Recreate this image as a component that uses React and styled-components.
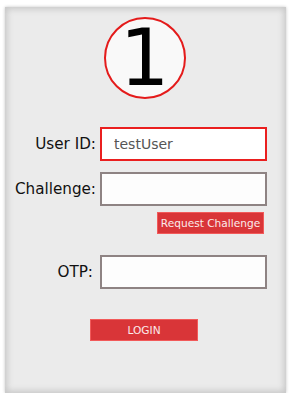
import React, { useState } from "react";
import styled, { createGlobalStyle } from "styled-components";

const GlobalStyle = createGlobalStyle`
  html, body {
    margin: 0;
    padding: 0;
    background: #ffffff;
  }
  body {
    font-family: "DejaVu Sans", sans-serif;
  }
`;

const Panel = styled.div`
  box-sizing: border-box;
  width: 281px;
  height: 386px;
  margin: 7px 0 0 5px;
  background: #ebebeb;
  box-shadow: 0 0 3px #c4c4c4, inset 0 0 6px 2px #c6c6c6;
  padding-top: 10px;
  display: flex;
  flex-direction: column;
  align-items: center;
`;

const Badge = styled.div`
  box-sizing: border-box;
  width: 82px;
  height: 82px;
  border-radius: 50%;
  border: 2px solid #e41b1b;
  background: #f9f9f9;
  display: flex;
  align-items: center;
  justify-content: center;
  font-size: 78px;
  line-height: 1;
  color: #000;
  margin-left: -2px;
`;

const Form = styled.div`
  align-self: flex-start;
  display: flex;
  flex-direction: column;
  margin-top: 28px;
`;

const Row = styled.div`
  display: flex;
  align-items: center;
  gap: 4px;
  margin-top: ${(p) => p.$top || 0}px;
`;

const Label = styled.label`
  width: 91px;
  text-align: right;
  font-size: 15.2px;
  color: #111;
  padding-right: ${(p) => p.$shift || 0}px;
  box-sizing: border-box;
`;

const Field = styled.input`
  box-sizing: border-box;
  width: 167px;
  height: 34px;
  border: 2px solid ${(p) => (p.$active ? "#ea1f1f" : "#8e8383")};
  background: ${(p) => (p.$active ? "#ffffff" : "#fdfdfd")};
  padding: 0 12px;
  font-family: "DejaVu Sans", sans-serif;
  font-size: 14px;
  color: #555;
  outline: none;
`;

const Side = styled.div`
  display: flex;
  justify-content: flex-end;
  width: 259px;
  margin-top: 6px;
`;

const RedButton = styled.button`
  box-sizing: border-box;
  border: 1px solid #f25a5a;
  background: #d93538;
  color: #fbeaea;
  font-family: "DejaVu Sans", sans-serif;
  font-size: 10.6px;
  width: ${(p) => p.$w}px;
  height: 22px;
  padding: 0;
  cursor: pointer;
`;

const Bottom = styled.div`
  margin-top: 30px;
  margin-left: -3px;
`;

export default function App() {
  const [user, setUser] = useState("testUser");
  const [challenge, setChallenge] = useState("");
  const [otp, setOtp] = useState("");

  return (
    <>
      <GlobalStyle />
      <Panel>
        <Badge>1</Badge>
        <Form>
          <Row>
            <Label>User ID:</Label>
            <Field $active value={user} onChange={(e) => setUser(e.target.value)} />
          </Row>
          <Row $top={11}>
            <Label>Challenge:</Label>
            <Field value={challenge} onChange={(e) => setChallenge(e.target.value)} />
          </Row>
          <Side>
            <RedButton $w={107}>Request Challenge</RedButton>
          </Side>
          <Row $top={21}>
            <Label $shift={3}>OTP:</Label>
            <Field value={otp} onChange={(e) => setOtp(e.target.value)} />
          </Row>
        </Form>
        <Bottom>
          <RedButton $w={108}>LOGIN</RedButton>
        </Bottom>
      </Panel>
    </>
  );
}
